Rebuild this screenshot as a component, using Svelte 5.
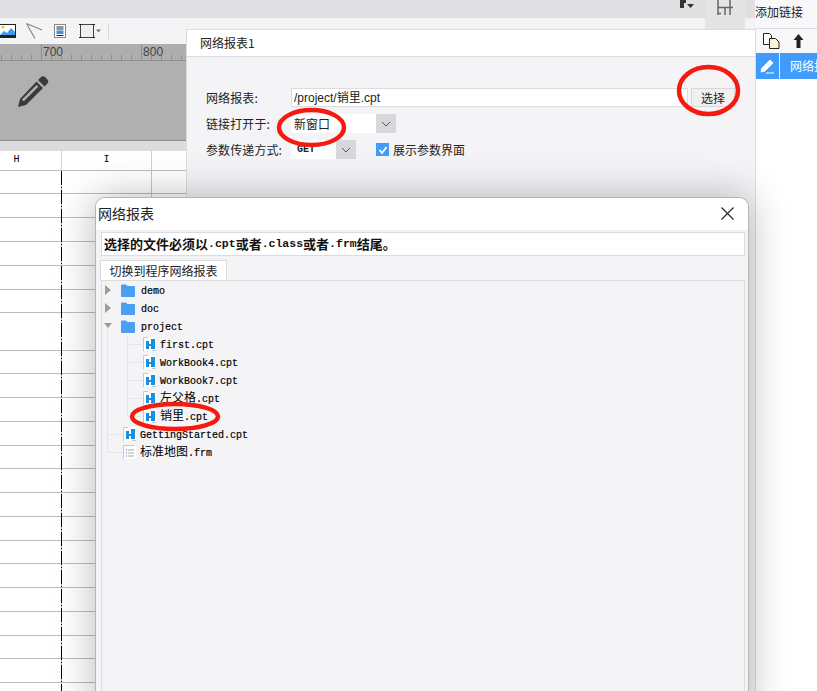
<script>
  const rowHeights = [23, 24, 24, 24, 24, 23, 38, 23, 24, 24, 24, 23, 24, 24, 24, 23, 24, 24, 24, 23, 24, 24];
  const tree = [
    { name: 'demo', kind: 'folder', arrow: 'right' },
    { name: 'doc', kind: 'folder', arrow: 'right' },
    { name: 'project', kind: 'folder', arrow: 'down' },
    { name: 'first.cpt', kind: 'cpt', depth: 1 },
    { name: 'WorkBook4.cpt', kind: 'cpt', depth: 1 },
    { name: 'WorkBook7.cpt', kind: 'cpt', depth: 1 },
    { cjk: '左父格', name: '.cpt', kind: 'cpt', depth: 1 },
    { cjk: '销里', name: '.cpt', kind: 'cpt', depth: 1 },
    { name: 'GettingStarted.cpt', kind: 'cpt', depth: 0 },
    { cjk: '标准地图', name: '.frm', kind: 'frm', depth: 0 }
  ];
</script>

<div class="app">
  <div class="main">
    <div class="topbar">
      <svg class="cursor" width="14" height="10" viewBox="0 0 14 10"><path d="M0 0h6v3h-2v5h-4z" fill="#333"/><path d="M7 4h7l-3.500 4z" fill="#333"/></svg>
      <div class="gridbtn">
        <svg width="17" height="15" viewBox="0 0 17 15"><path d="M1 0v15M1 7.500h15M8 7.500v7.500M13 0v15M1 13.500h3" stroke="#666" stroke-width="1.500" fill="none"/></svg>
      </div>
    </div>
    <div class="toolbar">
      <svg class="t1" width="16" height="14" viewBox="0 0 16 14"><rect width="16" height="14" fill="#222"/><rect x="0" y="1" width="15" height="10" fill="#fff"/><path d="M0 11l4-4 3 2 4-5 4 4v3H0z" fill="#3d9cf0"/><circle cx="3" cy="3" r="1.500" fill="#f5c040"/></svg>
      <svg class="t2" width="17" height="16" viewBox="0 0 17 16"><path d="M0.500 0.500L16 7M0.500 0.500L9 15.500" stroke="#888" stroke-width="1.200" fill="none"/></svg>
      <svg class="t3" width="12" height="14" viewBox="0 0 12 14"><rect x=".5" y=".5" width="11" height="13" fill="#fff" stroke="#888"/><path d="M2.500 3h7M2.500 5h7M2.500 11.500h7" stroke="#222"/><rect x="2.500" y="6.500" width="7" height="3.500" fill="#3d8fe0"/></svg>
      <svg class="t4" width="22" height="16" viewBox="0 0 22 16"><rect x="1.500" y="1.500" width="13" height="13" fill="#efeff1" stroke="#444"/><path d="M0 1.500h3M13 1.500h3M0 14.500h3M13 14.500h3" stroke="#222"/><path d="M17 6.500h5l-2.500 3z" fill="#777"/></svg>
      <span class="tsep"></span>
    </div>
    <div class="ruler"><span class="r700">700</span><span class="r800">800</span></div>
    <div class="canvas">
      <svg class="pencil" width="32" height="32" viewBox="0 0 32 32">
        <path d="M23.500 1.500a3.500 3.500 0 0 1 5 0l1.500 1.500a3.500 3.500 0 0 1 0 5l-2.500 2.500-6.500-6.500z" fill="#3a3a3a"/>
        <path fill-rule="evenodd" d="M19.500 5.500l6.500 6.500-17 17-8 2 2-8zM19.500 9l-14.500 14.500 1.800 1.800 14.500-14.500z" fill="#3a3a3a"/>
      </svg>
    </div>
    <div class="strip"></div>
    <div class="sheet">
      <div class="head"><span class="hc hc1">H</span><span class="hc hc2">I</span><span class="hc hc3"></span></div>
      {#each rowHeights as h}
        <div class="row" style="height:{h - 1}px"><span class="c1"></span><span class="c2"></span></div>
      {/each}
    </div>
  </div>

  <aside class="side">
    <div class="sidetitle">添加链接</div>
    <div class="sidetools">
      <svg width="17" height="16" viewBox="0 0 17 16"><path d="M.5.500h6l2 2v9h-8z" fill="#fff" stroke="#222"/><path d="M6.500 5.500h6l3.500 3.500v6.500h-9.500z" fill="#fbf3dc" stroke="#222"/></svg>
      <svg width="11" height="14" viewBox="0 0 11 14"><path d="M5.500 0l5 6h-3v8h-4v-8h-3z" fill="#222"/></svg>
    </div>
    <div class="siderow">
      <span class="sidepen">
        <svg width="15" height="15" viewBox="0 0 15 15"><path d="M10 1l3 3-8 8-4 1 1-4zM6 14h8" fill="#fff" stroke="#fff"/></svg>
      </span>
      <span class="sidename">网络报表1</span>
    </div>
    <div class="sidefill"></div>
  </aside>

  <section class="panel">
    <div class="ptitle">网络报表1</div>
    <div class="form">
      <div class="frow r1">
        <label for="path">网络报表:</label>
        <div class="pathinput" id="path">/project/销里.cpt</div>
        <button class="choose">选择</button>
      </div>
      <div class="frow r2">
        <span class="lab">链接打开于:</span>
        <div class="sel s1"><span>新窗口</span><i><svg width="10" height="6" viewBox="0 0 10 6"><path d="M1 1l4 4 4-4" fill="none" stroke="#555"/></svg></i></div>
      </div>
      <div class="frow r3">
        <span class="lab">参数传递方式:</span>
        <div class="sel s2"><span class="get">GET</span><i><svg width="10" height="6" viewBox="0 0 10 6"><path d="M1 1l4 4 4-4" fill="none" stroke="#555"/></svg></i></div>
        <span class="check"><svg width="12" height="12" viewBox="0 0 12 12"><path d="M2.500 6l2.500 3 4.500-6" fill="none" stroke="#fff" stroke-width="1.800"/></svg></span>
        <span class="checklab">展示参数界面</span>
      </div>
    </div>
  </section>

  <section class="dialog">
    <header class="dhead">
      <span>网络报表</span>
      <svg width="13" height="13" viewBox="0 0 13 13"><path d="M.5.500l12 12M12.500.500l-12 12" stroke="#222" stroke-width="1.100"/></svg>
    </header>
    <div class="info"><span>选择的文件必须以</span><em>.cpt</em><span>或者</span><em>.class</em><span>或者</span><em>.frm</em><span>结尾。</span></div>
    <div class="tab">切换到程序网络报表</div>
    <div class="tree">
      <span class="guide g1"></span>
      <span class="guide g2"></span>
      {#each tree as item}
        <div class="node" class:d1={item.depth === 1} class:d0={item.depth === 0}>
          {#if item.arrow}
            <span class="arrow {item.arrow}"></span>
          {/if}
          {#if item.kind === 'folder'}
            <svg class="ico" width="14" height="13" viewBox="0 0 14 13"><path d="M0 1.500a1 1 0 0 1 1-1h4l1.500 1.500h6.500a1 1 0 0 1 1 1v9a1 1 0 0 1-1 1h-12a1 1 0 0 1-1-1z" fill="#4a9ff5"/></svg>
          {:else if item.kind === 'cpt'}
            <svg class="ico" width="13" height="14" viewBox="0 0 13 14"><rect width="13" height="14" fill="#fff"/><path d="M.5 14V.5H5M9 13.500h4" stroke="#c8c8c8" fill="none"/><path d="M3 4h3v3h2V2h4v10H8V9H6v3H3z" fill="#1a8fe0"/></svg>
          {:else}
            <svg class="ico" width="13" height="14" viewBox="0 0 13 14"><rect width="13" height="14" fill="#fff"/><path d="M.5 14V.5H12" stroke="#c8c8c8" fill="none"/><path d="M3 5h1M3 8h1M3 11h1" stroke="#3d6fb0"/><path d="M5 5h6M5 8h6M5 11h6" stroke="#aaa"/></svg>
          {/if}
          <span class="nm" class:lat={!item.cjk}>{#if item.cjk}<span class="cjk">{item.cjk}</span>{/if}{item.name}</span>
        </div>
      {/each}
    </div>
  </section>

  <svg class="marks" width="817" height="691" viewBox="0 0 817 691">
    <ellipse cx="708.500" cy="90.500" rx="29.500" ry="23.500"/>
    <ellipse cx="311.500" cy="127.500" rx="32.500" ry="17.500"/>
    <ellipse cx="175" cy="416.500" rx="43" ry="12.500"/>
  </svg>
</div>

<style>
  :global(body) { margin: 0; background: #fff; }
  .app {
    position: relative;
    width: 817px;
    height: 691px;
    overflow: hidden;
    display: flex;
    font-family: "Noto Sans CJK SC", "Liberation Sans", sans-serif;
    font-size: 12px;
    color: #222;
  }
  .main { width: 755px; flex: none; display: flex; flex-direction: column; }
  .topbar { height: 18px; background: #e0e0e2; display: flex; justify-content: flex-end; align-items: flex-start; position: relative; }
  .cursor { margin-right: 11px; }
  .gridbtn { width: 40px; height: 29px; background: #e4e4e5; margin-right: 10px; display: flex; justify-content: center; align-items: flex-start; position: relative; z-index: 1; }
  .toolbar { height: 26px; background: #f4f4f7; display: flex; align-items: center; padding-left: 0; }
  .t2 { margin-left: 10px; margin-top: -1px; }
  .t3 { margin-left: 11px; }
  .t4 { margin-left: 13px; }
  .tsep { width: 1px; height: 16px; background: #d8d8da; margin-left: 7px; }
  .ruler {
    height: 17px;
    box-sizing: border-box;
    border-bottom: 1px solid #8e8e8e;
    background:
      repeating-linear-gradient(90deg, #8e8e8e 0 1px, transparent 1px 10px) 1px 11px / 100% 5px no-repeat,
      linear-gradient(#8e8e8e, #8e8e8e) 41px 0 / 1px 16px no-repeat,
      linear-gradient(#8e8e8e, #8e8e8e) 141px 0 / 1px 16px no-repeat,
      #aeaeae;
    display: flex;
    color: #444;
    font: 12px/16px "Liberation Sans", sans-serif;
    padding-left: 43px;
  }
  .r800 { margin-left: 80px; }
  .canvas { height: 80px; box-sizing: border-box; background: #b0b0b0; border-bottom: 1px solid #8e8e8e; padding: 15px 0 0 17px; }
  .pencil { display: block; }
  .strip { height: 10px; background: #dcdcde; }
  .sheet { position: relative; flex: 1; background: #fff; overflow: hidden; }
  .sheet::after {
    content: "";
    position: absolute;
    left: 61px;
    top: 20px;
    bottom: 0;
    width: 1px;
    background: repeating-linear-gradient(#000 0 14px, #bbb 14px 16px, #000 16px 17px, #bbb 17px 19px);
  }
  .head { height: 20px; box-sizing: border-box; display: flex; border-bottom: 1px solid #bdbdbd; }
  .hc { display: block; text-align: center; font: 10px/18px "Liberation Mono", monospace; color: #000; box-sizing: border-box; border-right: 1px solid #cfcfcf; }
  .hc1 { width: 62px; padding-right: 28px; }
  .hc2 { width: 90px; }
  .hc3 { flex: 1; border-right: 0; }
  .row { display: flex; border-bottom: 1px solid #bcbcbc; box-sizing: content-box; }
  .c1 { width: 62px; }
  .c2 { width: 90px; border-right: 1px solid #c4c4c4; box-sizing: border-box; }
  .side { flex: 1; display: flex; flex-direction: column; background: #fff; min-width: 0; }
  .sidetitle { height: 29px; background: #f8f8fa; line-height: 24px; font-size: 12px; color: #222; white-space: nowrap; box-sizing: border-box; border-bottom: 1px solid #dcdcde; }
  .sidetools { height: 24px; background: #f8f8fa; display: flex; align-items: center; gap: 13px; padding-left: 7px; border-left: 1px solid #dcdcde; }
  .siderow { height: 26px; background: #419cf9; display: flex; color: #fff; overflow: hidden; white-space: nowrap; border-left: 1px solid #dcdcde; }
  .sidefill { flex: 1; border-left: 1px solid #dcdcde; }
  .sidepen { width: 24px; box-sizing: border-box; border-right: 1px solid #dbe9f8; display: flex; align-items: center; justify-content: center; flex: none; }
  .sidename { margin-left: 10px; line-height: 26px; }

  .panel { position: absolute; left: 186px; top: 29px; width: 569px; height: 700px; background: #f4f4f7; box-sizing: border-box; border: 1px solid #dcdcde; border-width: 1px 0 0 1px; }
  .ptitle { height: 26px; background: #fff; border-bottom: 1px solid #dcdcde; line-height: 26px; padding-left: 13px; }
  .form { padding: 31px 0 0 19px; display: flex; flex-direction: column; gap: 7px; }
  .frow { display: flex; align-items: center; height: 19px; white-space: nowrap; }
  .frow label, .lab { width: 85px; flex: none; color: #222; letter-spacing: .1px; }
  .pathinput { width: 397px; height: 19px; box-sizing: border-box; border: 1px solid #dcdcde; background: #fff; padding-left: 2px; line-height: 19px; font-family: "Liberation Sans", "Noto Sans CJK SC", sans-serif; }
  .choose { width: 44px; height: 19px; margin-left: 3px; padding: 0; border: 1px solid #d8d8da; background: #f0f0f1; font: inherit; line-height: 17px; color: #222; }
  .sel { height: 19px; background: #fff; display: flex; justify-content: space-between; line-height: 19px; }
  .sel i { width: 20px; background: #d8d8dc; display: flex; align-items: center; justify-content: center; }
  .s1 { width: 105px; }
  .s1 span { padding-left: 3px; }
  .s2 { width: 65px; }
  .get { padding-left: 6px; font: 700 10px/19px "Liberation Mono", monospace; }
  .check { width: 13px; height: 13px; background: #419cf9; margin-left: 20px; display: flex; align-items: center; justify-content: center; }
  .checklab { margin-left: 4px; }

  .dialog { position: absolute; left: 95px; top: 197px; width: 654px; height: 520px; box-sizing: border-box; background: #f4f4f7; border: 1px solid #b4b4b4; border-radius: 10px 10px 0 0; box-shadow: 0 0 40px rgba(0, 0, 0, .28); display: flex; flex-direction: column; padding: 0 3px 0 5px; }
  .dhead { height: 33px; background: #fff; margin: 0 -3px 0 -5px; border-radius: 9px 9px 0 0; display: flex; align-items: center; justify-content: space-between; padding: 0 14px 2px 2px; font-size: 14px; flex: none; color: #222; border-bottom: 1px solid #ececef; box-sizing: border-box; }
  .info { height: 24px; margin-top: 1px; box-sizing: border-box; background: #fff; border: 1px solid #dcdcde; display: flex; align-items: center; padding: 0 0 1px 2px; font-weight: 700; font-size: 13px; color: #111; flex: none; white-space: nowrap; }
  .info em { font: 700 11.500px "Liberation Mono", monospace; color: #111; }
  .tab { width: 127px; height: 20px; margin-top: 4px; margin-left: -1px; box-sizing: border-box; background: #fff; border: 1px solid #dcdcde; border-bottom: 0; text-align: center; line-height: 19px; font-size: 12px; flex: none; }
  .tree { position: relative; flex: 1; box-sizing: border-box; border: 1px solid #dcdcde; }
  .guide { position: absolute; width: 1px; background: #e6e6ea; }
  .g1 { left: 5px; top: 45px; height: 126px; }
  .g2 { left: 25px; top: 55px; height: 80px; }
  .node { position: relative; display: flex; align-items: center; height: 18px; padding-left: 19px; gap: 6px; white-space: nowrap; }
  .node.d0 { padding-left: 21px; gap: 4px; }
  .node.d1 { padding-left: 41px; gap: 4px; }
  .node.d0::before, .node.d1::before { content: ""; position: absolute; height: 1px; background: #e6e6ea; top: 9px; }
  .node.d0::before { left: 5px; width: 15px; }
  .node.d1::before { left: 25px; width: 15px; }
  .ico { flex: none; }
  .nm { font: 10px/18px "Liberation Mono", monospace; color: #000; -webkit-text-stroke: .2px #000; }
  .nm.lat { padding-top: 3px; }
  .cjk { font: 12px/18px "Noto Sans CJK SC", sans-serif; -webkit-text-stroke: 0; }
  .arrow { position: absolute; width: 0; height: 0; border-style: solid; border-color: transparent; }
  .arrow.right { left: 3px; top: 4px; border-width: 5px 0 5px 6px; border-left-color: #9c9c9c; }
  .arrow.down { left: 2px; top: 6px; border-width: 5px 4.500px 0; border-top-color: #9c9c9c; }
  .marks { position: absolute; left: 0; top: 0; pointer-events: none; }
  .marks ellipse { fill: none; stroke: #f41a10; stroke-width: 4.500; }
</style>
